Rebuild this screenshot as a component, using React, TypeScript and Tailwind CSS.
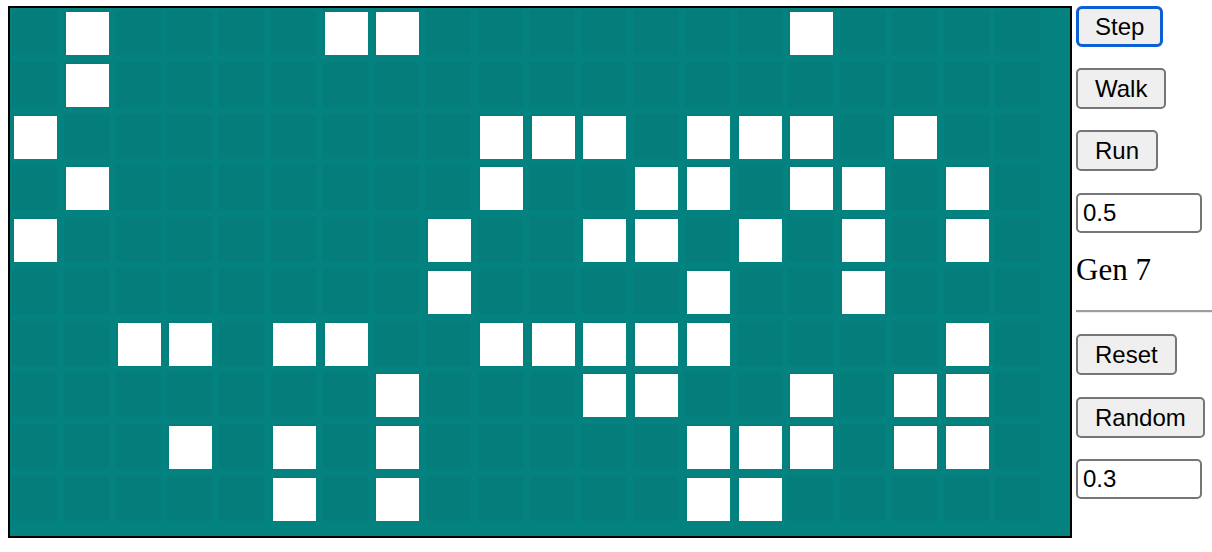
const alive: number[][] = [
  [1, 6, 7, 15],
  [1],
  [0, 9, 10, 11, 13, 14, 15, 17],
  [1, 9, 12, 13, 15, 16, 18],
  [0, 8, 11, 12, 14, 16, 18],
  [8, 13, 16],
  [2, 3, 5, 6, 9, 10, 11, 12, 13, 18],
  [7, 11, 12, 15, 17, 18],
  [3, 5, 7, 13, 14, 15, 17, 18],
  [5, 7, 13, 14],
];

const COLS = 20;

const btn =
  "h-[41px] px-[17px] rounded-[5px] bg-[#efefef] border-2 border-[#767676] text-[24px] leading-none text-black";
const input =
  "w-[126px] h-[40px] rounded-[5px] border-2 border-[#767676] bg-white pl-[5px] text-[24px] text-black outline-none";

const Board = () => (
  <div className="w-[1064px] h-[532px] shrink-0 border-2 border-black bg-[#038280] p-[2px]">
    <div className="grid grid-cols-[repeat(20,45px)] auto-rows-[45px] gap-[6.75px]">
      {alive.map((row, r) =>
        Array.from({ length: COLS }, (_, c) =>
          row.includes(c) ? (
            <div key={`${r}-${c}`} className="bg-white border-t-2 border-l-2 border-[#057d7b]" />
          ) : (
            <div key={`${r}-${c}`} className="bg-[#057d7b]" />
          )
        )
      )}
    </div>
  </div>
);

export default function App() {
  return (
    <div
      className="flex w-[1212px] h-[552px] bg-white pt-[6px] pl-[8px] overflow-hidden"
      style={{ fontFamily: '"Liberation Sans", Arial, sans-serif' }}
    >
      <Board />

      {/* controls */}
      <div className="ml-[4px] flex-1 flex flex-col items-start">
        <button className="h-[41px] px-[16px] rounded-[6px] bg-[#efefef] border-[3px] border-[#0b60d6] text-[24px] leading-none text-black">
          Step
        </button>
        <button className={`${btn} mt-[21px]`}>Walk</button>
        <button className={`${btn} mt-[21px]`}>Run</button>
        <input className={`${input} mt-[22px]`} defaultValue="0.5" />
        <div
          className="mt-[20px] text-[31px] leading-[34px] text-black"
          style={{ fontFamily: '"Liberation Serif", "Times New Roman", serif' }}
        >
          Gen 7
        </div>
        <div className="mt-[23px] w-full h-[3px] border-t-2 border-[#9e9e9e] border-b border-b-[#ececec]" />
        <button className={`${btn} mt-[21px]`}>Reset</button>
        <button className={`${btn} mt-[22px] h-[40px]`}>Random</button>
        <input className={`${input} mt-[21px]`} defaultValue="0.3" />
      </div>
    </div>
  );
}
